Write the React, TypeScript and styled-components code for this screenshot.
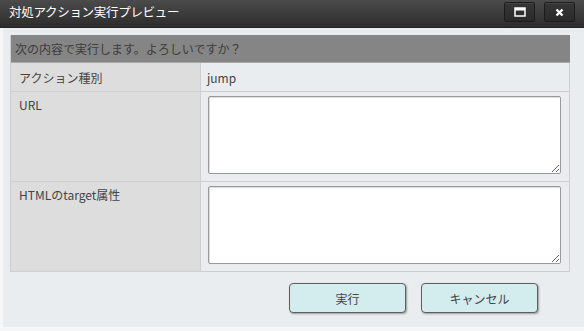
import React, { FC } from 'react';
import styled, { createGlobalStyle } from 'styled-components';

const GlobalStyle = createGlobalStyle`
  html, body {
    margin: 0;
    padding: 0;
    background: #f4f6f7;
  }
  body {
    font-family: "Noto Sans CJK JP", "Noto Sans", sans-serif;
    font-size: 12px;
    color: #444;
  }
`;

const Window = styled.div`
  width: 584px;
  height: 327px;
  display: flex;
  flex-direction: column;
`;

const TitleBar = styled.div`
  height: 28px;
  flex-shrink: 0;
  display: flex;
  align-items: center;
  justify-content: space-between;
  padding: 0 9px 0 9px;
  box-sizing: border-box;
  background: linear-gradient(#4b4b4b, #2c2c2c);
  border-bottom: 1px solid #222;
`;

const Title = styled.span`
  color: #fff;
  font-size: 12.5px;
  letter-spacing: -0.3px;
  line-height: 1;
  margin-top: -3px;
`;

const TitleButtons = styled.div`
  display: flex;
  gap: 9px;
  margin-top: -3px;
`;

const TitleButton = styled.button`
  width: 31px;
  height: 20px;
  padding: 0;
  display: flex;
  align-items: center;
  justify-content: center;
  background: linear-gradient(#363636, #2a2a2a);
  border: 1px solid #1c1c1c;
  border-radius: 2px;
  box-shadow: inset 0 1px 0 rgba(255, 255, 255, 0.08);
`;

const Body = styled.div`
  flex: 1;
  margin-left: 3px;
  background: #e9edf0;
  padding: 7px 14px 0 7px;
  display: flex;
  flex-direction: column;
`;

const Table = styled.div`
  display: grid;
  grid-template-columns: 190px 1fr;
  border: 1px solid #cfcfcf;
  border-top: none;
`;

const Header = styled.div`
  grid-column: 1 / 3;
  height: 27px;
  display: flex;
  align-items: center;
  padding-left: 4px;
  background: #858585;
  color: #3c3c3c;
  border-bottom: 1px solid #a9a9a9;
`;

const Label = styled.div<{ $tall?: boolean }>`
  background: #dddddd;
  padding: ${(p) => (p.$tall ? '4px 8px' : '0 8px')};
  display: flex;
  align-items: ${(p) => (p.$tall ? 'flex-start' : 'center')};
  border-right: 1px solid #cfcfcf;
  border-bottom: 1px solid #cfcfcf;
  height: ${(p) => (p.$tall ? '90px' : '29px')};
  box-sizing: border-box;
`;

const Value = styled.div<{ $tall?: boolean; $last?: boolean }>`
  padding: ${(p) => (p.$tall ? '4px 9px 0 7px' : '0 6px')};
  display: flex;
  align-items: ${(p) => (p.$tall ? 'flex-start' : 'center')};
  border-bottom: ${(p) => (p.$last ? 'none' : '1px solid #cfcfcf')};
  height: ${(p) => (p.$tall ? '90px' : '29px')};
  box-sizing: border-box;
`;

const Area = styled.textarea`
  width: 353px;
  height: 78px;
  box-sizing: border-box;
  border: 1px solid #9a9a9a;
  border-radius: 2px;
  background: #fff;
  box-shadow: inset 1px 1px 1px rgba(0, 0, 0, 0.15);
  resize: both;
  font-family: inherit;
`;

const LastLabel = styled(Label)`
  border-bottom: none;
  height: 89px;
`;

const LastValue = styled(Value)`
  height: 89px;
`;

const Actions = styled.div`
  display: flex;
  gap: 15px;
  padding: 11px 0 0 279px;
`;

const Button = styled.button`
  width: 117px;
  height: 30px;
  background: #d3ecee;
  border: 1px solid #5e5e5e;
  border-radius: 4px;
  box-shadow: 1px 1px 2px rgba(0, 0, 0, 0.35);
  font-family: "Noto Sans CJK JP", sans-serif;
  font-size: 12px;
  color: #444;
`;

const App: FC = () => (
  <>
    <GlobalStyle />
    <Window>
      <TitleBar>
        <Title>対処アクション実行プレビュー</Title>
        <TitleButtons>
          <TitleButton aria-label="maximize">
            <svg width="12" height="10" viewBox="0 0 12 10">
              <rect x="1" y="1" width="10" height="8" fill="none" stroke="#fff" strokeWidth="1.5" />
              <rect x="1" y="1" width="10" height="2.5" fill="#fff" />
            </svg>
          </TitleButton>
          <TitleButton aria-label="close">
            <svg width="9" height="9" viewBox="0 0 9 9">
              <path d="M1.5 1.5 L7.5 7.5 M7.5 1.5 L1.5 7.5" stroke="#fff" strokeWidth="2.4" />
            </svg>
          </TitleButton>
        </TitleButtons>
      </TitleBar>
      <Body>
        <Table>
          <Header>次の内容で実行します。よろしいですか？</Header>
          <Label>アクション種別</Label>
          <Value>jump</Value>
          <Label $tall>URL</Label>
          <Value $tall>
            <Area />
          </Value>
          <LastLabel $tall>HTMLのtarget属性</LastLabel>
          <LastValue $tall $last>
            <Area />
          </LastValue>
        </Table>
        <Actions>
          <Button>実行</Button>
          <Button>キャンセル</Button>
        </Actions>
      </Body>
    </Window>
  </>
);

export default App;
